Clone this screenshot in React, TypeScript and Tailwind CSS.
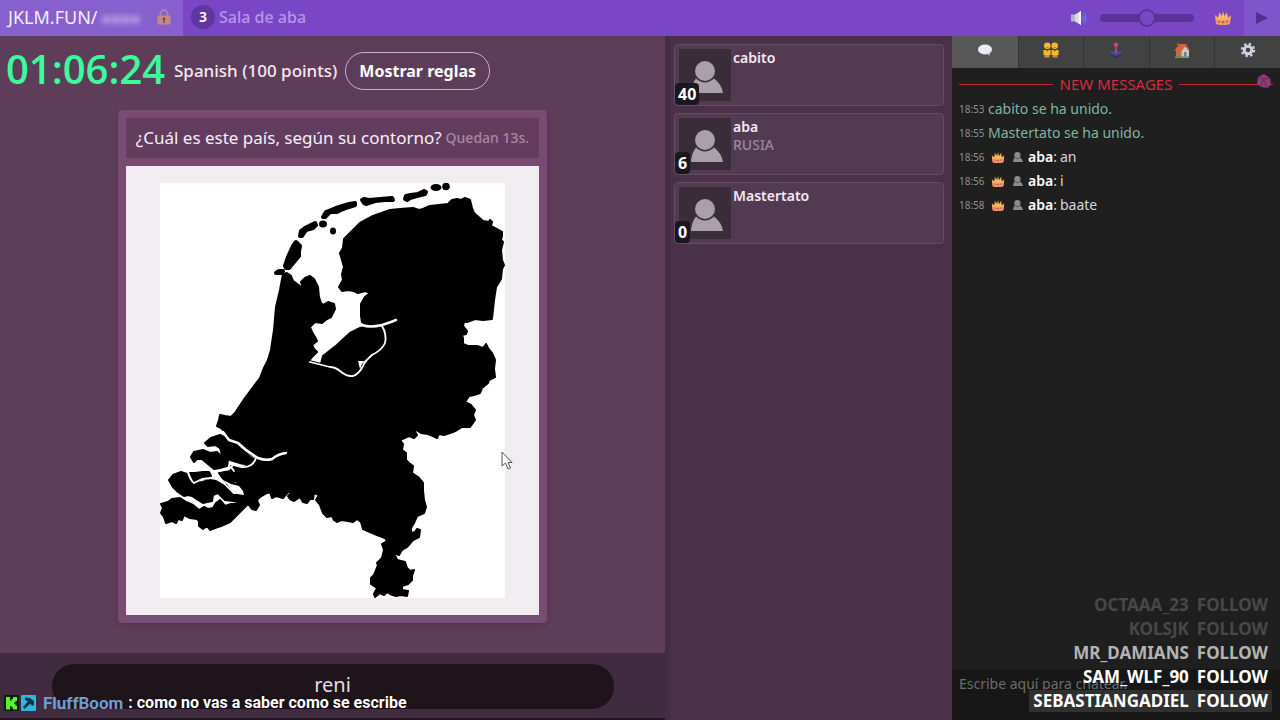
import React from 'react';

interface Player {
  name: string;
  score: number;
  answer?: string;
}

interface ChatMessage {
  time: string;
  text: string;
  author?: string;
}

interface Follow {
  name: string;
  tone: string;
}

const players: Player[] = [
  { name: 'cabito', score: 40 },
  { name: 'aba', score: 6, answer: 'RUSIA' },
  { name: 'Mastertato', score: 0 },
];

const messages: ChatMessage[] = [
  { time: '18:53', text: 'cabito se ha unido.' },
  { time: '18:55', text: 'Mastertato se ha unido.' },
  { time: '18:56', author: 'aba', text: 'an' },
  { time: '18:56', author: 'aba', text: 'i' },
  { time: '18:58', author: 'aba', text: 'baate' },
];

const follows: Follow[] = [
  { name: 'OCTAAA_23', tone: 'text-[#484848]' },
  { name: 'KOLSJK', tone: 'text-[#484848]' },
  { name: 'MR_DAMIANS', tone: 'text-[#b4b4b4]' },
  { name: 'SAM_WLF_90', tone: 'text-white' },
  { name: 'SEBASTIANGADIEL', tone: 'bg-[#303030] text-white' },
];

const Crown: React.FC<{ className: string }> = ({ className }) => (
  <svg viewBox="0 0 18 16" className={className} aria-hidden="true">
    <path d="M2 14 1 5l3.500 3L5 2l3 4 1-5 1.500 5L13 2l.8 6L17 5l-1 9q-7 2-14 0z" fill="#f7b062" />
    <path d="M2 10q7 2 14 0l-.3 4q-6.700 2-13.400 0z" fill="#f09a5c" />
    <circle cx="5" cy="11.500" r="1.200" fill="#d9607a" />
    <circle cx="9" cy="12" r="1.300" fill="#b8587c" />
    <circle cx="13" cy="11.500" r="1.200" fill="#d9607a" />
    <path d="m4.500 8 .6-3 1.500 3zm4 0L9 4l.8 4zm3.500 0 1-3 .5 3z" fill="#ffd07a" />
  </svg>
);

const Person: React.FC<{ className: string }> = ({ className }) => (
  <svg viewBox="0 0 32 32" className={className} fill="currentColor" aria-hidden="true">
    <circle cx="14" cy="10" r="10" />
    <path d="M0 32q.5-9 5-14.500 9 8 18 0 7.500 5.500 9 14.500z" />
  </svg>
);

const Lock: React.FC = () => (
  <svg viewBox="0 0 14 16" className="h-4 w-[14px]" aria-hidden="true">
    <path d="M3.500 7V4.500a3.500 3.500 0 0 1 7 0V7" fill="none" stroke="#a586b4" strokeWidth="1.800" />
    <rect x=".5" y="6.500" width="13" height="9" rx="1" fill="#c48a80" />
    <path d="M7 8.500a1.300 1.300 0 0 0-.6 2.500l-.4 2.500h2L7.600 11A1.300 1.300 0 0 0 7 8.500z" fill="#6b3c6e" />
  </svg>
);

const Speaker: React.FC = () => (
  <svg viewBox="0 0 18 16" className="h-4 w-[18px]" aria-hidden="true">
    <path d="M1 4.500h4v7H1z" fill="#b9b5c4" />
    <path d="m5 4.500 6-3.500v14l-6-3.500z" fill="#dedce6" />
    <path d="M9 2.200 11 1v14l-2-1.200z" fill="#f6f5fa" />
    <path d="M12.500 5.500q1.800 2.500 0 5M14 3q3.500 5 0 10" fill="none" stroke="#4a8df0" strokeWidth="1.300" />
  </svg>
);

const Speech: React.FC = () => (
  <svg viewBox="0 0 16 16" className="size-4" aria-hidden="true">
    <ellipse cx="8" cy="7.500" rx="7" ry="5" fill="#eeeaf4" />
    <path d="M9 11.500l4 2-1-4z" fill="#e2dcea" />
  </svg>
);

const Friends: React.FC = () => (
  <svg viewBox="0 0 16 16" className="size-4" aria-hidden="true">
    <g fill="#f0bb2c">
      <circle cx="4.300" cy="3.800" r="3.300" />
      <circle cx="11.700" cy="3.800" r="3.300" />
      <path d="M.5 8h7v5H.5zM8.500 8h7v5h-7z" />
    </g>
    <path d="M1.500 13h5v2.500h-5zM9.500 13h5v2.500h-5z" fill="#c8953b" />
    <path d="M3 5q1.500 1.500 3 0zM10.300 5q1.500 1.500 3 0zM3 8h2.500l-1 2zM10.500 8H13l-1.500 2z" fill="#95601f" />
  </svg>
);

const Joystick: React.FC = () => (
  <svg viewBox="0 0 16 16" className="size-4" aria-hidden="true">
    <path d="m1 11 7-3.500 7 3.500-7 4z" fill="#4a4790" />
    <path d="m1 11 7 3 7-3v1.500L8 16l-7-3.500z" fill="#302f60" />
    <path d="M7.200 4h1.600v7.500H7.200z" fill="#a94d7a" />
    <circle cx="8" cy="2.700" r="2.300" fill="#d04070" />
  </svg>
);

const House: React.FC = () => (
  <svg viewBox="0 0 16 16" className="size-4" aria-hidden="true">
    <path d="M1 14.500h14V16H1z" fill="#39b56a" />
    <path d="M2 8h6v6.500H2z" fill="#b9734b" />
    <path d="m7.500 8 3.500-4 4 4v6.500H7.500z" fill="#cfc5bd" />
    <path d="M5 2h7l3.500 6-1 .6L11 4.500 7.500 9 .5 8.500z" fill="#d8613c" />
    <path d="M3 1h2v4H3z" fill="#b14a35" />
    <path d="M10 10h2.500v4.500H10z" fill="#5e83a5" />
  </svg>
);

const Gear: React.FC = () => (
  <svg viewBox="0 0 16 16" className="size-4" aria-hidden="true">
    <circle cx="8" cy="8" r="3.800" fill="none" stroke="#ccd3e0" strokeWidth="3" />
    <circle cx="8" cy="8" r="6.100" fill="none" stroke="#ccd3e0" strokeWidth="2.200" strokeDasharray="2.400 2.391" />
  </svg>
);

const tabs = [
  { label: 'Chat', icon: <Speech /> },
  { label: 'Jugadores', icon: <Friends /> },
  { label: 'Juego', icon: <Joystick /> },
  { label: 'Sala', icon: <House /> },
  { label: 'Ajustes', icon: <Gear /> },
];

// Outline of the mainland, clockwise from the northern tip of the west coast
const mainland = `
  283,274 287,273 291,276 293,281 300,286 303,288 301,282 305,278 310,276 314,279 318,287 319,297 321,303
  323,305 328,302 334,304 335,309 331,317 327,319 322,323 315,322 310,327 312,332 315,337 317,341 312,345
  314,349 317,352 312,357 309,361 321,364 323,356 337,345 350,333 360,328 368,326 362,322 361,316 361,304
  365,297 370,293 365,291 358,293 354,291 348,290 342,291 339,287 343,280 342,274 344,267 342,260 340,253
  343,248 344,239 350,233 360,223 373,216 390,210 400,209 413,208 419,210 423,209 430,206 448,204 452,200
  457,199 461,200 465,198 470,200 472,208 474,213 483,221 489,222 490,220 492,222 491,226 502,232 502,236
  501,240 503,242 501,250 502,260 504,265 502,269 501,279 496,287 494,300 492,319 483,320 475,319 467,322
  464,322 463,326 467,331 466,334 462,335 463,338 463,344 468,346 477,346 483,348 486,344 488,348 492,353
  495,360 494,369 495,377 489,380 488,383 482,388 480,393 474,395 469,396 465,402 471,405 475,410 473,415
  475,420 470,427 462,427 457,430 453,432 447,434 444,435 439,434 437,438 433,436 428,434 421,433 416,430
  414,430 417,435 414,438 409,436 400,440 403,444 402,450 406,453 406,460 409,463 413,466 412,473 418,477
  423,483 423,490 424,500 426,507 424,513 417,516 414,523 411,528 411,533 415,532 417,529 420,530 419,537
  413,540 407,547 402,550 399,555 394,553 397,560 405,562 407,568 410,571 414,570 412,576 412,580 408,584
  402,586 402,590 408,591 407,596 401,595 396,596 390,594 387,592 384,595 380,593 375,597 374,594 377,588
  371,584 371,578 374,575 376,570 378,565 377,563 382,558 384,550 382,544 387,541 385,538 377,535 370,532
  363,529 361,522 357,519 353,522 348,521 341,520 337,522 334,520 332,516 327,517 323,513 320,505 316,500
  319,495 314,493 313,499 310,499 307,503 303,502 300,497 294,501 290,499 288,496 293,491 288,492 283,498
  276,496 272,498 270,492 267,493 260,497 257,500 259,505 256,510 252,509 248,504 240,512 230,522 221,526
  215,528 210,530 207,526 203,529 199,526 199,521 197,519 190,518 184,515 182,520 178,519 176,523 172,521
  166,523 164,517 161,513 163,508 161,504 168,502 172,499 180,498 186,502 193,505 199,510 204,507 208,509
  213,508 216,503 220,500 225,506 231,504 240,504 245,500 240,495 233,489 227,484 230,482 236,484 242,485
  235,481 227,483 221,476 219,473 229,471 231,466 240,468 252,465 256,457 240,450 229,440 225,432 221,428
  217,426 219,420 220,415 225,416 231,417 235,413 245,398 260,378 264,368 268,360 271,350 274,330 276,307
  280,290`;

const deltaIslands = [
  '205,443 211,438 220,435 228,439 235,443 242,447 247,455 254,459 253,464 248,465 240,463 230,460 222,455 220,448 215,445 208,446',
  '191,457 194,452 203,450 210,453 217,452 222,457 228,460 227,466 220,468 214,469 208,464 202,459 197,459 194,462',
  '169,480 173,475 181,472 187,474 193,483 202,482 210,480 216,481 223,485 228,490 233,495 243,495 247,500 242,503 233,501 225,500 218,493 213,495 212,501 207,502 203,503 198,500 192,496 188,495 184,496 178,492 173,487',
  '190,473 195,473 203,472 209,472 211,476 207,479 201,478 194,481',
];

const waddenIslands = [
  '296,242 293,246 288,257 285,266 286,268 289,268 294,262 299,256 299,251 300,246',
  '276,273 279,271 283,271 281,273',
  '300,236 301,231 305,228 311,225 315,223 316,225 313,228 306,230 302,236',
  '323,217 326,212 336,208 349,204 355,203 355,205 349,207 341,210 337,212 330,212 325,217',
  '362,200 364,199 369,200 392,198 393,200 385,200 375,201 366,204 364,203',
  '405,199 406,196 411,195 418,194 424,191 426,192 425,194 417,196 410,198 407,200',
];

const CountryShape: React.FC = () => (
  <svg viewBox="160 183 345 415" className="w-full bg-white" role="img" aria-label="Contorno del país">
    <g fill="#000" stroke="#000" strokeLinejoin="round">
      <polygon points={mainland} strokeWidth="2" />
      {deltaIslands.map((points) => (
        <polygon key={points} points={points} strokeWidth="2" />
      ))}
      {waddenIslands.map((points) => (
        <polygon key={points} points={points} strokeWidth="4" />
      ))}
    </g>
    <g fill="#000">
      <ellipse cx="323" cy="224" rx="4" ry="3.500" />
      <ellipse cx="333" cy="231" rx="3" ry="3.500" />
      <ellipse cx="436" cy="187.500" rx="5.500" ry="3.500" />
      <circle cx="446" cy="186.500" r="3.800" />
    </g>
    {/* inner water */}
    <g fill="none" stroke="#fff" strokeLinecap="round" strokeLinejoin="round" strokeWidth="1.800">
      <path d="M362 325q8 3 20 0l9-3 5-2" strokeWidth="2.500" />
      <path d="M382 326q5 8 3 17-3 7-13 12-7 6-9 11-4 8-10 10-6 1-13-5-5-4-10-4l-8-2-12-3" />
      <path d="M223 432l6 8 9 3q8 8 20 15 8 3 14 1 6-5 14-6" strokeWidth="2.500" />
      <path d="M219 471l10-2 4-4 8 2q12 1 15-9" />
      <path d="M231 467l3 4" />
      <path d="M188 472q2 8 6 11l8-4 9-1" />
    </g>
    <path d="M358 361h6l4-3-6 6-2 5z" fill="#fff" />
    <path d="M223 480l8 4 8 2 4 5 1 4-7-1-6-5z" fill="#fff" />
  </svg>
);

const PlayerCard: React.FC<{ player: Player }> = ({ player }) => (
  <li className="flex h-[62px] gap-[2px] rounded border border-[#654c65] bg-[#533a52] p-1">
    <div className="relative size-13 shrink-0 bg-[#3a2c39]">
      <Person className="absolute right-2 bottom-2 size-8 text-[#aaa0ac]" />
      <span className="absolute -bottom-1 -left-1 rounded bg-[#1b171e] px-[3px] text-base leading-[22px] font-bold text-white">
        {player.score}
      </span>
    </div>
    <div className="text-sm leading-[18px]">
      <p className="font-semibold text-[#f3e9f3]">{player.name}</p>
      {player.answer && <p className="font-medium text-[#9b879c]">{player.answer}</p>}
    </div>
  </li>
);

const App: React.FC = () => {
  return (
    <div className="relative flex h-screen min-h-[720px] flex-col overflow-hidden bg-[#1f1f1f] font-['Noto_Sans',sans-serif] text-white">
      <header className="flex h-9 shrink-0 items-stretch bg-[#7946c5]">
        <div className="flex w-[183px] items-center justify-between bg-[#8760cd] pr-3 pb-[2px] pl-2 text-lg text-[#f4eefb]">
          <span>
            JKLM.FUN/
            <span className="inline-block pl-1 text-base text-[#d5c3f0] blur-[3px]">●●●●</span>
          </span>
          <Lock />
        </div>
        <div className="flex items-center gap-1 pb-[2px] pl-2 text-base">
          <span className="flex size-6 items-center justify-center rounded-full bg-[#5e389e] text-sm font-semibold">3</span>
          <span className="font-medium text-[#b697e6]">Sala de aba</span>
        </div>
        <div className="ml-auto flex items-center">
          <Speaker />
          <input
            type="range"
            aria-label="Volumen"
            defaultValue={50}
            className="mr-5 ml-3 h-2 w-[94px] appearance-none rounded-full bg-[#5b3398] [&::-webkit-slider-thumb]:size-[18px] [&::-webkit-slider-thumb]:appearance-none [&::-webkit-slider-thumb]:rounded-full [&::-webkit-slider-thumb]:border-2 [&::-webkit-slider-thumb]:border-[#5b3398] [&::-webkit-slider-thumb]:bg-[#7946c5]"
          />
          <Crown className="mr-3 h-4 w-[18px]" />
          <button aria-label="Mostrar panel" className="flex h-full w-9 items-center justify-center bg-[#8055c9]">
            <svg viewBox="0 0 12 12" className="size-3" aria-hidden="true">
              <path d="M0 0l12 6-12 6z" fill="#543091" />
            </svg>
          </button>
        </div>
      </header>

      <div className="flex min-h-0 flex-1">
        <main className="flex min-w-0 flex-1 flex-col bg-[#5d3d59]">
          <div className="flex h-[74px] shrink-0 items-center pb-1 pl-[6px]">
            <time className="w-[168px] pb-1 text-[40px] leading-none font-semibold text-[#3dfb9a] font-['Open_Sans',sans-serif]">
              01:06:24
            </time>
            <p className="mr-2 text-[17px] font-medium text-[#f3e9f3]">Spanish (100 points)</p>
            <button className="h-[38px] rounded-full border border-[#c8b4c8] px-[13px] text-base font-bold">Mostrar reglas</button>
          </div>

          <section className="mx-auto w-[429px] rounded bg-[#774b74] p-2 shadow-md">
            <h1 className="mb-2 flex h-10 items-center justify-center gap-1 bg-[#633d60] text-[17px] whitespace-nowrap text-[#f8eff8]">
              ¿Cuál es este país, según su contorno?
              <span className="text-sm font-medium text-[#a788a5]">Quedan 13s.</span>
            </h1>
            <div className="bg-[#f0ecf0] px-[34px] py-[17px]">
              <CountryShape />
            </div>
          </section>

          <form className="mt-auto flex h-[67px] items-start justify-center border-b-2 border-[#1f141f] bg-[#412b40] pt-[11px]">
            <input
              aria-label="Respuesta"
              defaultValue="reni"
              className="h-[45px] w-[562px] rounded-[22px] bg-[#1f131c] pb-1 text-center text-xl text-[#e6dde6] outline-none"
            />
          </form>
        </main>

        <aside className="w-[287px] shrink-0 border-l-[5px] border-[#452d45] bg-[#4b3049] py-2 pr-2 pl-1">
          <ul className="flex flex-col gap-[7px]">
            {players.map((player) => (
              <PlayerCard key={player.name} player={player} />
            ))}
          </ul>
        </aside>

        <aside className="flex w-[328px] shrink-0 flex-col bg-[#1f1f1f]">
          <nav className="grid h-8 shrink-0 grid-cols-5">
            {tabs.map((tab, index) => (
              <button
                key={tab.label}
                aria-label={tab.label}
                className={
                  index === 0
                    ? 'flex items-center justify-center bg-[#575757] pb-1'
                    : 'flex items-center justify-center border-l border-[#333] bg-[#424242] pb-1'
                }
              >
                {tab.icon}
              </button>
            ))}
          </nav>

          <div className="relative flex-1 px-[7px] pt-1">
            <svg viewBox="0 0 16 16" className="absolute top-[5px] right-2 size-4" aria-hidden="true">
              <path d="M2 4l6-3 6 4 1 6-3 4-7-1-4-3z" fill="#8a3f78" />
              <path d="M2 4l5 2 7-1M7 6l-2 8M7 6l5 9" fill="none" stroke="#5d2b58" />
            </svg>
            <div className="flex h-6 items-center gap-[7px] text-[15px] text-[#d52c46]">
              <span className="h-px flex-1 bg-[#c4283f]" />
              NEW MESSAGES
              <span className="h-px flex-1 bg-[#c4283f]" />
            </div>
            <ul className="flex flex-col gap-[2px] pt-[2px]">
              {messages.map((message, index) => (
                <li key={index} className="flex h-[22px] items-center text-sm text-[#d8d8d8]">
                  <time className="w-[29px] text-[10px] text-[#909090]">{message.time}</time>
                  {message.author ? (
                    <>
                      <Crown className="mr-2 ml-[3px] h-[13px] w-[14px]" />
                      <Person className="mr-[5px] size-[10px] text-[#8c8c8c]" />
                      <span className="mr-[3px]">
                        <b className="font-semibold text-white">{message.author}</b>:
                      </span>
                      {message.text}
                    </>
                  ) : (
                    <span className="text-[#82b5a0]">{message.text}</span>
                  )}
                </li>
              ))}
            </ul>
          </div>

          <textarea
            aria-label="Mensaje"
            placeholder="Escribe aquí para chatear."
            className="h-[51px] shrink-0 resize-none bg-[#171717] px-[7px] pt-[5px] text-sm outline-none placeholder:text-[#6c6c6c]"
          />
        </aside>
      </div>

      <ul className="absolute right-2 bottom-2 flex flex-col items-end text-[17px] leading-[22px] font-bold">
        {follows.map((follow) => (
          <li key={follow.name} className="pt-[2px]">
            <div className={`flex gap-2 px-1 ${follow.tone}`}>
              <span>{follow.name}</span>
              <span>FOLLOW</span>
            </div>
          </li>
        ))}
      </ul>

      <p className="absolute bottom-1 left-1 flex items-center text-base font-bold font-['Roboto',sans-serif]">
        <svg viewBox="0 0 34 16" className="mr-[5px] h-4 w-[34px]" aria-hidden="true">
          <rect width="15" height="16" rx="1" fill="#0b1d08" />
          <path d="M2 2h4v3.500h1.500V4H9V2h4v4h-1.500v1.500H10v1.500h1.500v1.500H13v4H9v-2H7.500V11H6v3.500H2z" fill="#53f52b" />
          <rect x="17" width="15" height="16" rx="1" fill="#31b5e6" />
          <path d="M21 2.500l5 .5 4 3v4l-2 1-1.500-2.500L20.500 14 19 12l5-5.500-3-1.500z" fill="#0e3447" />
        </svg>
        <span className="mr-[5px] text-[17px] text-[#719ccf]">FluffBoom</span>
        <span className="[text-shadow:0_0_2px_#000]">: como no vas a saber como se escribe</span>
      </p>

      <svg viewBox="0 0 12 19" className="absolute top-[451px] left-[501px] h-[19px] w-3" aria-hidden="true">
        <path d="M1 1v14l3.500-3 2.500 6 2.500-1-2.500-5.500h4z" fill="#fff" stroke="#555" />
      </svg>
    </div>
  );
};

export default App;
